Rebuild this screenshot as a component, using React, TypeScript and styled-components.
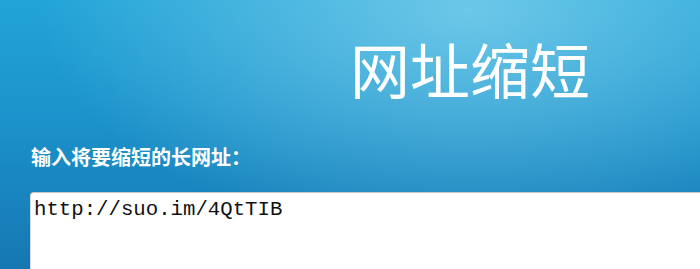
import React from 'react';
import styled, {createGlobalStyle} from 'styled-components';

const GlobalStyle = createGlobalStyle`
  html, body {
    margin: 0;
    padding: 0;
  }
  body {
    font-family: "Noto Sans CJK SC", "Noto Sans", sans-serif;
  }
`;

const Page = styled.div`
  width: 700px;
  height: 269px;
  overflow: hidden;
  background:
    radial-gradient(ellipse 430px 230px at 470px 10px, rgba(140, 215, 240, 0.7), rgba(140, 215, 240, 0) 100%),
    linear-gradient(to bottom, #22a4d7 0%, #1c94cc 40%, #1677b2 100%);
  display: flex;
  flex-direction: column;
`;

const Header = styled.div`
  padding: 32px 0 0 350px;
  height: 104px;
  box-sizing: border-box;
`;

const Title = styled.h1`
  margin: 0;
  color: #fff;
  font-family: "Microsoft YaHei", "Noto Sans CJK SC", sans-serif;
  font-size: 60px;
  font-weight: 400;
  line-height: 72px;
  white-space: nowrap;
`;

const Form = styled.div`
  padding: 0 0 0 30px;
  display: flex;
  flex-direction: column;
`;

const Label = styled.label`
  display: block;
  margin: 40px 0 0 1px;
  color: #fff;
  font-family: "SimSun", "Noto Sans CJK SC", serif;
  font-size: 20px;
  font-weight: 700;
  line-height: 26px;
  white-space: nowrap;
`;

const UrlInput = styled.textarea`
  margin-top: 22px;
  width: 720px;
  height: 120px;
  box-sizing: border-box;
  border: none;
  border-top: 1px solid #c8c8c8;
  border-left: 1px solid #d8d8d8;
  border-radius: 4px 0 0 0;
  background: #fff;
  padding: 4px 3px;
  font-family: "Liberation Mono", monospace;
  font-size: 20.7px;
  line-height: 26px;
  color: #111;
  resize: none;
  outline: none;
`;

export default function App() {
    return (
        <Page>
            <GlobalStyle/>
            <Header>
                <Title>网址缩短</Title>
            </Header>
            <Form>
                <Label htmlFor={'url'}>输入将要缩短的长网址：</Label>
                <UrlInput id={'url'} defaultValue={'http://suo.im/4QtTIB'} spellCheck={false}/>
            </Form>
        </Page>
    );
}
